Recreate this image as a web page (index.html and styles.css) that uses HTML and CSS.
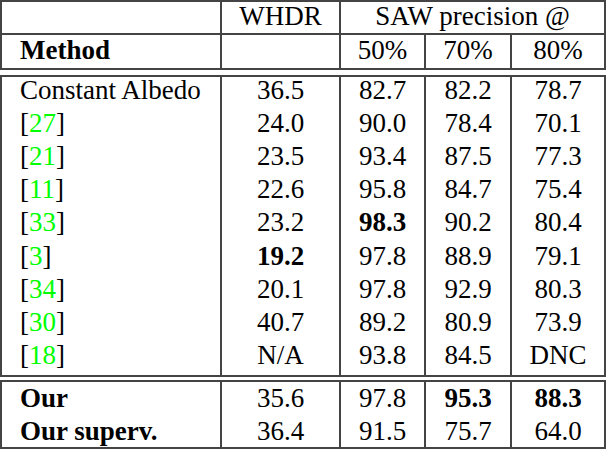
FILE: index.html
```html
<!DOCTYPE html>
<html lang="en">
<head>
    <meta charset="UTF-8">
    <title>WHDR and SAW precision</title>
    <link rel="stylesheet" href="styles.css">
</head>
<body>
    <div class="results">
        <table class="block head">
            <colgroup>
                <col class="c-method"><col class="c-whdr"><col class="c-p50"><col class="c-p70"><col class="c-p80">
            </colgroup>
            <tr class="r-top">
                <td></td>
                <td class="num">WHDR</td>
                <td class="num" colspan="3">SAW precision @</td>
            </tr>
            <tr class="r-sub">
                <td class="name"><b>Method</b></td>
                <td></td>
                <td class="num">50%</td>
                <td class="num">70%</td>
                <td class="num">80%</td>
            </tr>
        </table>

        <table class="block body">
            <colgroup>
                <col class="c-method"><col class="c-whdr"><col class="c-p50"><col class="c-p70"><col class="c-p80">
            </colgroup>
            <tr><td class="name">Constant Albedo</td><td class="num">36.5</td><td class="num">82.7</td><td class="num">82.2</td><td class="num">78.7</td></tr>
            <tr><td class="name">[<span class="cite">27</span>]</td><td class="num">24.0</td><td class="num">90.0</td><td class="num">78.4</td><td class="num">70.1</td></tr>
            <tr><td class="name">[<span class="cite">21</span>]</td><td class="num">23.5</td><td class="num">93.4</td><td class="num">87.5</td><td class="num">77.3</td></tr>
            <tr><td class="name">[<span class="cite">11</span>]</td><td class="num">22.6</td><td class="num">95.8</td><td class="num">84.7</td><td class="num">75.4</td></tr>
            <tr><td class="name">[<span class="cite">33</span>]</td><td class="num">23.2</td><td class="num"><b>98.3</b></td><td class="num">90.2</td><td class="num">80.4</td></tr>
            <tr><td class="name">[<span class="cite">3</span>]</td><td class="num"><b>19.2</b></td><td class="num">97.8</td><td class="num">88.9</td><td class="num">79.1</td></tr>
            <tr><td class="name">[<span class="cite">34</span>]</td><td class="num">20.1</td><td class="num">97.8</td><td class="num">92.9</td><td class="num">80.3</td></tr>
            <tr><td class="name">[<span class="cite">30</span>]</td><td class="num">40.7</td><td class="num">89.2</td><td class="num">80.9</td><td class="num">73.9</td></tr>
            <tr><td class="name">[<span class="cite">18</span>]</td><td class="num">N/A</td><td class="num">93.8</td><td class="num">84.5</td><td class="num">DNC</td></tr>
        </table>

        <table class="block foot">
            <colgroup>
                <col class="c-method"><col class="c-whdr"><col class="c-p50"><col class="c-p70"><col class="c-p80">
            </colgroup>
            <tr><td class="name"><b>Our</b></td><td class="num">35.6</td><td class="num">97.8</td><td class="num"><b>95.3</b></td><td class="num"><b>88.3</b></td></tr>
            <tr><td class="name"><b>Our superv.</b></td><td class="num">36.4</td><td class="num">91.5</td><td class="num">75.7</td><td class="num">64.0</td></tr>
        </table>
    </div>
</body>
</html>
```

FILE: styles.css
```css
body {
    margin: 0;
    background: #fff;
    font-family: "Liberation Serif", "Times New Roman", serif;
    font-size: 27px;
    color: #000;
}
.results {
    width: 606px;
    display: flex;
    flex-direction: column;
}
.block {
    width: 606px;
    table-layout: fixed;
    border-collapse: separate;
    border-spacing: 0;
    border-top: 2px solid #444;
    border-left: 2px solid #444;
}
.block td {
    border-right: 2px solid #444;
    padding: 0;
    line-height: 20px;
    white-space: nowrap;
    vertical-align: middle;
}
.block.head {
    margin-bottom: 5px;
}
.block.body {
    margin-bottom: 3px;
}

/* header rows */
.block.head td {
    border-bottom: 2px solid #444;
    padding-bottom: 3px;
}
.r-top { height: 33px; }
.r-sub { height: 35px; }

/* body rows sit a little high, as after the double rule */
.block.body tr { height: 33.1px; }
.block.body tr:last-child { height: 35.1px; }
.block.body td { padding-bottom: 7px; }

.block.foot tr { height: 32.5px; }
.block.foot tr:last-child { height: 34.5px; }

.block.body tr:last-child td,
.block.foot tr:last-child td {
    border-bottom: 2px solid #444;
}

.c-method { width: 220px; }
.c-whdr { width: 119px; }
.c-p50 { width: 85px; }
.c-p70 { width: 86px; }
.c-p80 { width: 94px; }

.name {
    padding-left: 18px !important;
    text-align: left;
}
.num {
    text-align: center;
}
.cite {
    color: #00ff00;
}
```
